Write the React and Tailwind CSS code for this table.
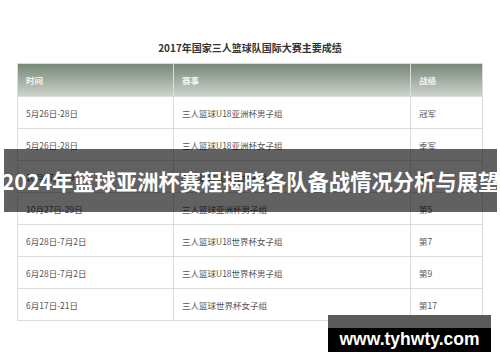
import React from "react";

const rows = [
  ["5月26日-28日", "三人篮球U18亚洲杯男子组", "冠军"],
  ["5月26日-28日", "三人篮球U18亚洲杯女子组", "季军"],
  ["10月27日-29日", "三人篮球亚洲杯女子组", "第3"],
  ["10月27日-29日", "三人篮球亚洲杯男子组", "第5"],
  ["6月28日-7月2日", "三人篮球U18世界杯女子组", "第7"],
  ["6月28日-7月2日", "三人篮球U18世界杯男子组", "第9"],
  ["6月17日-21日", "三人篮球世界杯女子组", "第17"],
];

export default function App() {
  return (
    <div className="relative w-[500px] h-[362px] bg-white overflow-hidden font-['Noto_Sans_CJK_SC','Noto_Sans',sans-serif]">
      <div className="pt-[41px] text-center text-[10px] font-bold leading-[14px] text-[#333]">
        2017年国家三人篮球队国际大赛主要成绩
      </div>
      <div className="mt-[8px] ml-[17px] w-[466px] border border-[#dcdcdc] text-[8.5px] leading-[12px]">
        <div className="flex h-[32px] bg-gradient-to-b from-[#788878] to-[#cdd3cc] text-[#f4f4f4] font-bold">
          <div className="w-[156px] border-r border-[#dcdcdc] pl-[8px] flex items-center">时间</div>
          <div className="w-[237px] border-r border-[#dcdcdc] pl-[8px] flex items-center">赛事</div>
          <div className="flex-1 pl-[8px] flex items-center">战绩</div>
        </div>
        {rows.map((r, i) => (
          <div key={i} className="flex h-[32px] border-t border-[#dcdcdc] text-[#555]">
            <div className="w-[156px] border-r border-[#dcdcdc] pl-[8px] flex items-center">{r[0]}</div>
            <div className="w-[237px] border-r border-[#dcdcdc] pl-[8px] flex items-center">{r[1]}</div>
            <div className="flex-1 pl-[8px] flex items-center">{r[2]}</div>
          </div>
        ))}
      </div>
      <div className="absolute left-[4px] top-[149px] w-[493px] h-[63px] bg-[rgba(0,0,0,0.62)] flex items-center justify-center">
        <span className="text-white font-bold text-[21.3px] leading-none whitespace-nowrap">
          2024年篮球亚洲杯赛程揭晓各队备战情况分析与展望
        </span>
      </div>
      <div className="absolute left-[328px] top-[315px] w-[163px]">
        <div className="h-[13px] bg-[#5a5a5a]" />
        <div className="h-[24px] bg-black flex items-center justify-center">
          <span className="text-white font-bold text-[17.5px] leading-none font-['Liberation_Sans',sans-serif]">
            www.tyhwty.com
          </span>
        </div>
      </div>
    </div>
  );
}
